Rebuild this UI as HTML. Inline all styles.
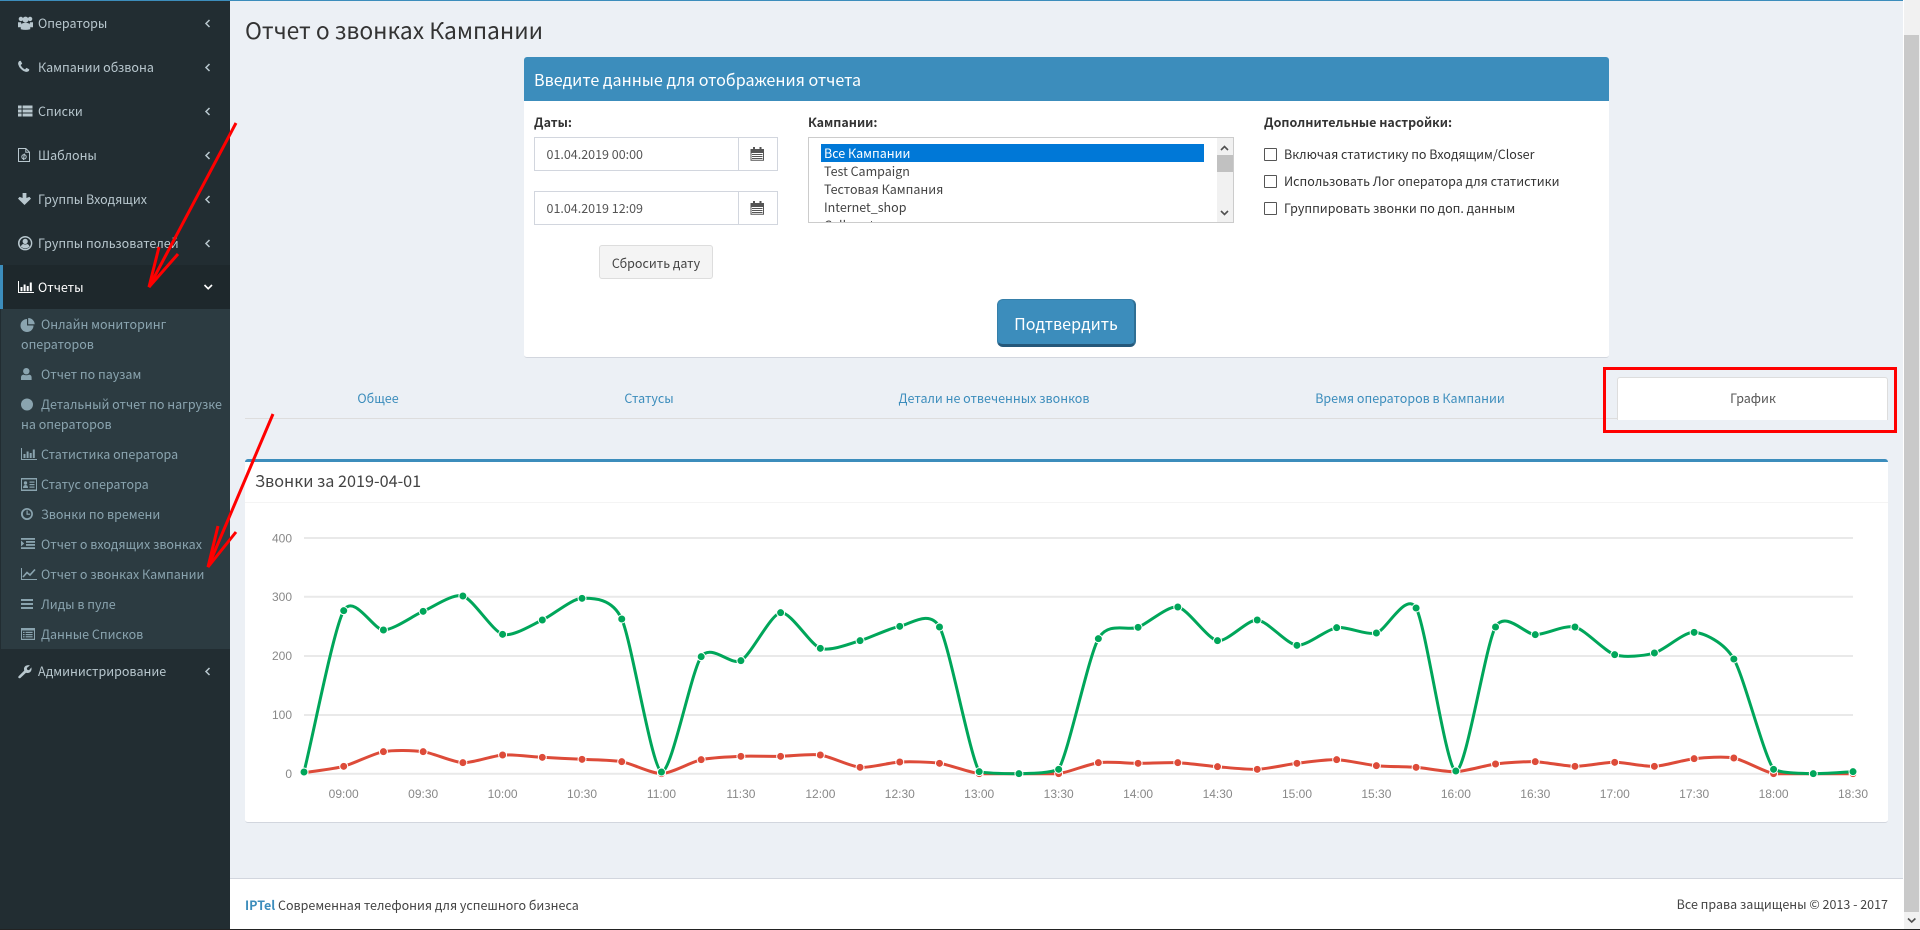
<!DOCTYPE html>
<html lang="ru">
<head>
<meta charset="utf-8">
<title>Отчет о звонках Кампании</title>
<style>
html,body{margin:0;padding:0;width:1920px;height:930px;overflow:hidden;background:#ecf0f5;}
body{position:relative;font-family:"Noto Sans CJK SC","Liberation Sans",sans-serif;font-size:12.5px;color:#333;}
.a{position:absolute;}
.t{position:absolute;white-space:nowrap;line-height:20px;height:20px;}
.m{color:#b8c7ce;left:38px;}
.s{color:#8aa4af;}
.b{font-weight:700;}
.l{color:#3c8dbc;transform:translateX(-50%);}
svg text{font-family:"Liberation Sans",sans-serif;font-size:12px;fill:#888;}
</style>
</head>
<body>
<!-- page chrome -->
<div class="a" style="left:0;top:0;width:1903px;height:1px;background:#3c8dbc"></div>
<div class="a" style="left:0;top:1px;width:230px;height:929px;background:#222d32"></div>
<div class="a" style="left:0;top:265px;width:230px;height:44px;background:#1e282c"></div>
<div class="a" style="left:0;top:265px;width:3px;height:44px;background:#3c8dbc"></div>
<div class="a" style="left:1px;top:309px;width:229px;height:340px;background:#2c3b41"></div>
<div class="a" style="left:1903px;top:0;width:17px;height:930px;background:#fff"></div>
<div class="a" style="left:1904px;top:0;width:16px;height:930px;background:#f1f1f1"></div>
<div class="a" style="left:1904px;top:35px;width:15px;height:877px;background:#c9c9c9"></div>

<!-- sidebar -->
<div class="t m" style="top:13px">Операторы</div>
<div class="t m" style="top:56.5px">Кампании обзвона</div>
<div class="t m" style="top:100.5px">Списки</div>
<div class="t m" style="top:144.5px">Шаблоны</div>
<div class="t m" style="top:188.5px">Группы Входящих</div>
<div class="t m" style="top:232.5px">Группы пользователей</div>
<div class="t m" style="top:276.5px;color:#fff">Отчеты</div>
<div class="t s" style="top:314px;left:41px">Онлайн мониторинг</div>
<div class="t s" style="top:334px;left:21px">операторов</div>
<div class="t s" style="top:364px;left:41px">Отчет по паузам</div>
<div class="t s" style="top:394px;left:41px">Детальный отчет по нагрузке</div>
<div class="t s" style="top:414px;left:21px">на операторов</div>
<div class="t s" style="top:444px;left:41px">Статистика оператора</div>
<div class="t s" style="top:474px;left:41px">Статус оператора</div>
<div class="t s" style="top:504px;left:41px">Звонки по времени</div>
<div class="t s" style="top:534px;left:41px">Отчет о входящих звонках</div>
<div class="t s" style="top:564px;left:41px">Отчет о звонках Кампании</div>
<div class="t s" style="top:594px;left:41px">Лиды в пуле</div>
<div class="t s" style="top:624px;left:41px">Данные Списков</div>
<div class="t m" style="top:660.5px">Администрирование</div>

<!-- heading -->
<div class="t" style="left:245px;top:14.5px;font-size:22.8px;line-height:30px;height:30px">Отчет о звонках Кампании</div>

<!-- report panel -->
<div class="a" style="left:524px;top:57px;width:1085px;height:300px;background:#fff;border-bottom:1px solid #d2d6de;border-radius:3px"></div>
<div class="a" style="left:524px;top:57px;width:1085px;height:44px;background:#3c8dbc;border-radius:3px 3px 0 0"></div>
<div class="t" style="left:534px;top:68px;font-size:16.1px;line-height:22px;height:22px;color:#fff">Введите данные для отображения отчета</div>

<div class="t b" style="left:534px;top:111.5px">Даты:</div>
<div class="t b" style="left:808px;top:111.5px">Кампании:</div>
<div class="t b" style="left:1264px;top:111.5px">Дополнительные настройки:</div>

<div class="a" style="left:534px;top:137px;width:242px;height:32px;border:1px solid #d2d6de;background:#fff"></div>
<div class="a" style="left:738px;top:138px;width:1px;height:32px;background:#d2d6de"></div>
<div class="t" style="left:546.5px;top:144px;color:#555">01.04.2019 00:00</div>
<div class="a" style="left:534px;top:191px;width:242px;height:32px;border:1px solid #d2d6de;background:#fff"></div>
<div class="a" style="left:738px;top:192px;width:1px;height:32px;background:#d2d6de"></div>
<div class="t" style="left:546.5px;top:198px;color:#555">01.04.2019 12:09</div>

<div class="a" style="left:599px;top:245px;width:112px;height:32px;border:1px solid #ddd;background:#f4f4f4;border-radius:3px"></div>
<div class="t" style="left:656px;top:252.5px;color:#444;transform:translateX(-50%)">Сбросить дату</div>

<!-- listbox -->
<div class="a" style="left:808px;top:137px;width:424px;height:84px;border:1px solid #ccc;background:#fff;overflow:hidden">
  <div class="a" style="left:12px;top:6px;width:383px;height:18px;background:#0078d7"></div>
  <div class="t" style="left:15px;top:6px;line-height:18px;height:18px;color:#fff">Все Кампании</div>
  <div class="t" style="left:15px;top:24px;line-height:18px;height:18px;color:#444">Test Campaign</div>
  <div class="t" style="left:15px;top:42px;line-height:18px;height:18px;color:#444">Тестовая Кампания</div>
  <div class="t" style="left:15px;top:60px;line-height:18px;height:18px;color:#444">Internet_shop</div>
  <div class="t" style="left:15px;top:78px;line-height:18px;height:18px;color:#444">Call center</div>
  <div class="a" style="right:0;top:0;width:16px;height:84px;background:#f1f1f1"></div>
  <div class="a" style="right:0;top:17px;width:16px;height:17px;background:#c1c1c1"></div>
</div>

<!-- checkboxes -->
<div class="a" style="left:1264px;top:148px;width:11px;height:11px;border:1px solid #555;border-radius:1px;background:#fff"></div>
<div class="a" style="left:1264px;top:175px;width:11px;height:11px;border:1px solid #555;border-radius:1px;background:#fff"></div>
<div class="a" style="left:1264px;top:202px;width:11px;height:11px;border:1px solid #555;border-radius:1px;background:#fff"></div>
<div class="t" style="left:1284px;top:143.5px">Включая статистику по Входящим/Closer</div>
<div class="t" style="left:1284px;top:170.5px">Использовать Лог оператора для статистики</div>
<div class="t" style="left:1284px;top:197.5px">Группировать звонки по доп. данным</div>

<!-- confirm -->
<div class="a" style="left:997px;top:299px;width:139px;height:48px;box-sizing:border-box;background:#3c8dbc;border:1px solid #367fa9;border-bottom:3px solid #25587a;border-right:2px solid #2f6f94;border-radius:6px"></div>
<div class="t" style="left:1066px;top:311px;font-size:16.1px;line-height:24px;height:24px;color:#fff;transform:translateX(-50%)">Подтвердить</div>

<!-- tabs -->
<div class="a" style="left:245px;top:418px;width:1372px;height:1px;background:#ddd"></div>
<div class="a" style="left:1617px;top:377px;width:269px;height:42px;background:#fff;border:1px solid #ddd;border-bottom:0;border-radius:3px 3px 0 0"></div>
<div class="t l" style="left:378px;top:388px">Общее</div>
<div class="t l" style="left:649px;top:388px">Статусы</div>
<div class="t l" style="left:994px;top:388px">Детали не отвеченных звонков</div>
<div class="t l" style="left:1410px;top:388px">Время операторов в Кампании</div>
<div class="t l" style="left:1753px;top:388px;color:#555">График</div>
<div class="a" style="left:1603px;top:367px;width:288px;height:60px;border:3px solid #f00"></div>

<!-- chart box -->
<div class="a" style="left:245px;top:459px;width:1643px;height:364px;box-sizing:border-box;background:#fff;border-top:3px solid #3c8dbc;border-bottom:1px solid #d2d6de;border-radius:3px"></div>
<div class="a" style="left:245px;top:502px;width:1643px;height:1px;background:#f4f4f4"></div>
<div class="t" style="left:255px;top:468px;font-size:16.2px;line-height:24px;height:24px;color:#444">Звонки за 2019-04-01</div>

<!-- footer -->
<div class="a" style="left:230px;top:878px;width:1673px;height:51px;background:#fff;border-top:1px solid #d2d6de;box-sizing:border-box"></div>
<div class="t" style="left:245px;top:894.5px;color:#444"><b style="color:#3c8dbc">IPTel</b> Современная телефония для успешного бизнеса</div>
<div class="t" style="right:32px;top:894px;color:#444">Все права защищены © 2013 - 2017</div>
<div class="a" style="left:0;top:929px;width:1920px;height:1px;background:#222"></div>

<svg class="a" style="left:0;top:0" width="1920" height="930" viewBox="0 0 1920 930" xmlns="http://www.w3.org/2000/svg">
  <!-- chart grid -->
  <g stroke="#e9e9e9" stroke-width="2">
    <line x1="304" x2="1853" y1="538" y2="538"/>
    <line x1="304" x2="1853" y1="596.7" y2="596.7"/>
    <line x1="304" x2="1853" y1="656" y2="656"/>
    <line x1="304" x2="1853" y1="715" y2="715"/>
    <line x1="304" x2="1853" y1="773.7" y2="773.7"/>
  </g>
  <g text-anchor="end">
    <text x="292" y="542.5">400</text>
    <text x="292" y="601">300</text>
    <text x="292" y="660">200</text>
    <text x="292" y="719">100</text>
    <text x="292" y="778">0</text>
  </g>
  <g text-anchor="middle">
    <text x="343.7" y="798">09:00</text><text x="423.2" y="798">09:30</text><text x="502.6" y="798">10:00</text><text x="582" y="798">10:30</text><text x="661.5" y="798">11:00</text><text x="740.9" y="798">11:30</text><text x="820.4" y="798">12:00</text><text x="899.8" y="798">12:30</text><text x="979.2" y="798">13:00</text><text x="1058.7" y="798">13:30</text><text x="1138.1" y="798">14:00</text><text x="1217.6" y="798">14:30</text><text x="1297" y="798">15:00</text><text x="1376.4" y="798">15:30</text><text x="1455.9" y="798">16:00</text><text x="1535.3" y="798">16:30</text><text x="1614.8" y="798">17:00</text><text x="1694.2" y="798">17:30</text><text x="1773.6" y="798">18:00</text><text x="1853" y="798">18:30</text>
  </g>
  <g id="series"></g>

  <!-- chevrons -->
  <g fill="none" stroke="#b8c7ce" stroke-width="1.5">
    <path d="M209.5 20 L206 23.5 L209.5 27"/>
    <path d="M209.5 64 L206 67.5 L209.5 71"/>
    <path d="M209.5 108 L206 111.5 L209.5 115"/>
    <path d="M209.5 152 L206 155.5 L209.5 159"/>
    <path d="M209.5 196 L206 199.5 L209.5 203"/>
    <path d="M209.5 240 L206 243.5 L209.5 247"/>
    <path d="M209.5 668 L206 671.5 L209.5 675"/>
  </g>
  <path d="M204.5 285 L208.2 288.7 L212 285" fill="none" stroke="#fff" stroke-width="1.6"/>

  <!-- top level icons -->
  <g fill="#b8c7ce">
    <g transform="translate(18,16)">
      <circle cx="2.9" cy="2.9" r="2.2"/><circle cx="12.1" cy="2.9" r="2.2"/><circle cx="7.5" cy="3.6" r="3"/>
      <path d="M0 6.2 h3 l.6 3.6 -.9 1.4 H0z M15 6.2 h-3 l-.6 3.6 .9 1.4 H15z"/>
      <path d="M3.6 7.6 Q7.5 6 11.4 7.6 Q12.6 10 12.2 13.2 Q7.5 14.6 2.8 13.2 Q2.4 10 3.6 7.6z"/>
    </g>
    <g transform="translate(16.6,59.8) scale(0.0079)">
      <path d="M1600 1240q0 27-10 70.5t-21 68.5q-21 50-122 106-94 51-186 51-27 0-53-3.5t-57.5-12.5-47-14.5-55.5-20.5-49-18q-98-35-175-83-127-79-264-216t-216-264q-48-77-83-175-3-9-18-49t-20.5-55.5-14.5-47-12.5-57.5-3.5-53q0-92 51-186 56-101 106-122 25-11 68.5-21t70.5-10q14 0 21 3 18 6 53 76 11 19 30 54t35 63.5 31 53.5q3 4 17.5 25t21.5 35.5 7 28.5q0 20-28.5 50t-62 55-62 53-28.5 46q0 9 5 22.5t8.5 20.5 14 24 11.5 19q76 137 174 235t235 174q2 1 19 11.5t24 14 20.5 8.5 22.5 5q18 0 46-28.5t53-62 55-62 50-28.5q14 0 28.5 7t35.5 21.5 25 17.5q25 15 53.5 31t63.5 35 54 30q70 35 76 53 3 7 3 21z"/>
    </g>
    <g transform="translate(18,105.5)">
      <rect x="0" y="0" width="3.6" height="3"/><rect x="4.6" y="0" width="9.9" height="3"/>
      <rect x="0" y="4" width="3.6" height="3"/><rect x="4.6" y="4" width="9.9" height="3"/>
      <rect x="0" y="8" width="3.6" height="3"/><rect x="4.6" y="8" width="9.9" height="3"/>
    </g>
    <g transform="translate(18,193)"><path d="M4.6 0 H8.4 V5 L11.4 3.9 13 5.6 6.5 12 0 5.6 1.6 3.9 4.6 5z"/></g>
    <g transform="translate(18,236)">
      <path fill-rule="evenodd" d="M7.2 0 A7.2 7.2 0 1 1 7.1 0z M7.2 1.5 A5.7 5.7 0 1 0 7.3 1.5z"/>
      <circle cx="7.2" cy="5.4" r="2.6"/>
      <path d="M2.8 10.8 Q3.5 8.4 5.2 8 Q7.2 9 9.2 8 Q10.9 8.4 11.6 10.8 Q7.2 14 2.8 10.8z"/>
    </g>
    <g transform="translate(18,665)"><path d="M.6 11.2 L6.2 5.6 Q5.4 2.4 7.6 .9 Q9.6 -.4 12 .4 L8.8 3 9.2 4.8 11 5.2 13.4 2.4 Q14 5 12.4 6.9 Q10.6 8.6 8 7.7 L2.4 13 Q1.2 13.6 .4 12.8 Q0 12 .6 11.2z"/></g>
  </g>
  <g transform="translate(18,148)" fill="none" stroke="#b8c7ce" stroke-width="1">
    <path d="M.5 .5 H7.8 L11.5 4.2 V13.5 H.5z M7.8 .5 V4.2 H11.5"/>
    <circle cx="6" cy="8.8" r="2.2"/><path d="M6.4 5.6 L5.4 12"/>
  </g>
  <g transform="translate(18,281)" fill="#fff">
    <path d="M0 0 H1 V11 H16 V12 H0z"/>
    <rect x="2.5" y="6" width="2" height="4.2"/><rect x="5.6" y="3.5" width="2" height="6.7"/><rect x="8.7" y="5" width="2" height="5.2"/><rect x="11.8" y="1.5" width="2" height="8.7"/>
  </g>

  <!-- submenu icons -->
  <g fill="#8aa4af">
    <path d="M27 319 A6.5 6.5 0 1 0 33.5 325.5 H27z"/><path d="M28.2 318 A6.5 6.5 0 0 1 34.7 324.3 H28.2z"/>
    <circle cx="26.3" cy="371.2" r="3.2"/><path d="M21 380 V377.4 Q21 375 23.4 374.6 Q26.3 376 29.2 374.6 Q31.6 375 31.6 377.4 V380z"/>
    <circle cx="27" cy="404.5" r="6"/>
    <path d="M21 448 H22 V459 H37 V460 H21z"/>
    <rect x="23.5" y="454" width="2" height="4"/><rect x="26.6" y="451.5" width="2" height="6.5"/><rect x="29.7" y="453" width="2" height="5"/><rect x="32.8" y="449.5" width="2" height="8.5"/>
    <path fill-rule="evenodd" d="M21 478 H37 V491 H21z M22 479.5 V489.5 H36 V479.5z"/>
    <circle cx="25.5" cy="483" r="1.7"/><path d="M23 488 Q23 485 25.5 485 Q28 485 28 488z"/>
    <rect x="29.5" y="481.5" width="5" height="1.2"/><rect x="29.5" y="484" width="5" height="1.2"/><rect x="29.5" y="486.5" width="5" height="1.2"/>
    <path fill-rule="evenodd" d="M27 508 A6 6 0 1 1 26.9 508z M27 509.8 A4.2 4.2 0 1 0 27.1 509.8z"/>
    <rect x="26.5" y="510.5" width="1.2" height="4"/><rect x="26.5" y="513.6" width="3.6" height="1.2"/>
    <rect x="21" y="538" width="14" height="1.8"/><rect x="26" y="541" width="9" height="1.8"/><rect x="26" y="544" width="9" height="1.8"/><rect x="21" y="547.2" width="14" height="1.8"/>
    <path d="M21 540.5 L24.2 543.5 21 546.5z"/>
    <path d="M21 568 H22 V579 H37 V580 H21z"/>
    <rect x="21" y="599" width="12" height="2"/><rect x="21" y="603" width="12" height="2"/><rect x="21" y="607" width="12" height="2"/>
    <path fill-rule="evenodd" d="M21 628 H35 V640 H21z M22 630.5 V638.8 H34 V630.5z"/>
    <rect x="23" y="631.8" width="1.6" height="1.2"/><rect x="25.6" y="631.8" width="7" height="1.2"/>
    <rect x="23" y="634" width="1.6" height="1.2"/><rect x="25.6" y="634" width="7" height="1.2"/>
    <rect x="23" y="636.2" width="1.6" height="1.2"/><rect x="25.6" y="636.2" width="7" height="1.2"/>
  </g>
  <path d="M23 577 L27 572.5 L30 575 L35 569.5" fill="none" stroke="#8aa4af" stroke-width="1.6"/>

  <!-- calendar icons -->
  <g fill="#555">
    <g transform="translate(750.5,147)">
      <path fill-rule="evenodd" d="M0 2 H13.5 V13.7 H0z M1 6 V12.7 H12.5 V6z"/><rect x="2.5" y="0" width="2" height="3.5"/><rect x="9" y="0" width="2" height="3.5"/>
      <path d="M1.5 7 h10.5 v1 h-10.5z M1.5 9 h10.5 v1 h-10.5z M1.5 11 h10.5 v1 h-10.5z"/>
    </g>
    <g transform="translate(750.5,201)">
      <path fill-rule="evenodd" d="M0 2 H13.5 V13.7 H0z M1 6 V12.7 H12.5 V6z"/><rect x="2.5" y="0" width="2" height="3.5"/><rect x="9" y="0" width="2" height="3.5"/>
      <path d="M1.5 7 h10.5 v1 h-10.5z M1.5 9 h10.5 v1 h-10.5z M1.5 11 h10.5 v1 h-10.5z"/>
    </g>
  </g>

  <!-- scrollbar arrows -->
  <g fill="none" stroke="#505050" stroke-width="1.6">
    <path d="M1221 150 L1224.5 146.5 L1228 150"/>
    <path d="M1221 211 L1224.5 214.5 L1228 211"/>
    <path d="M1908 918.5 L1911.7 922 L1915.4 918.5"/>
  </g>

  <!-- red arrows -->
  <g fill="none" stroke="#f00" stroke-width="3">
    <path d="M236 123 L149 287"/><path d="M159 247 L149 287 L178 254"/>
    <path d="M273 414 L208 567"/><path d="M218 526 L208 567 L236 532"/>
  </g>
</svg>

<script>
(function(){
var NS='http://www.w3.org/2000/svg',host=document.getElementById('series');
var green=[966,482,540,484,438,553,510,445,507,966,620,632,488,595,572,529,531,965,971,958,566,532,471,572,510,586,533,549,474,963,531,554,531,614,609,547,627,958,971,965];
var red=[968,949,905,905,938,915,922,928,935,971,929,919,919,915,952,936,940,971,971,971,938,940,938,950,958,940,929,947,952,965,942,935,949,937,949,926,924,971,971,971];
var bottom=773.7,step=(1853-304)/39;
function X(i){return 304+step*i;}
function Y(z){return 450+z/3;}
function draw(vals,color){
  var n=vals.length,ys=vals.map(Y),g=[],i;
  for(i=0;i<n;i++){
    if(i===0)g[i]=(ys[1]-ys[0])/step;
    else if(i===n-1)g[i]=(ys[n-1]-ys[n-2])/step;
    else g[i]=(ys[i+1]-ys[i-1])/(2*step);
  }
  var d='M'+X(0).toFixed(1)+' '+ys[0].toFixed(1),ix=step/4;
  for(i=1;i<n;i++){
    d+='C'+(X(i-1)+ix).toFixed(1)+' '+Math.min(bottom,ys[i-1]+ix*g[i-1]).toFixed(1)+' '+(X(i)-ix).toFixed(1)+' '+Math.min(bottom,ys[i]-ix*g[i]).toFixed(1)+' '+X(i).toFixed(1)+' '+ys[i].toFixed(1);
  }
  var p=document.createElementNS(NS,'path');
  p.setAttribute('d',d);p.setAttribute('fill','none');p.setAttribute('stroke',color);p.setAttribute('stroke-width','3');
  host.appendChild(p);
  for(i=0;i<n;i++){
    var c=document.createElementNS(NS,'circle');
    c.setAttribute('cx',X(i));c.setAttribute('cy',ys[i]);c.setAttribute('r','4');
    c.setAttribute('fill',color);c.setAttribute('stroke','#fff');c.setAttribute('stroke-width','1');
    host.appendChild(c);
  }
}
draw(red,'#dd4b39');
draw(green,'#00a65a');
})();
</script>
</body>
</html>
